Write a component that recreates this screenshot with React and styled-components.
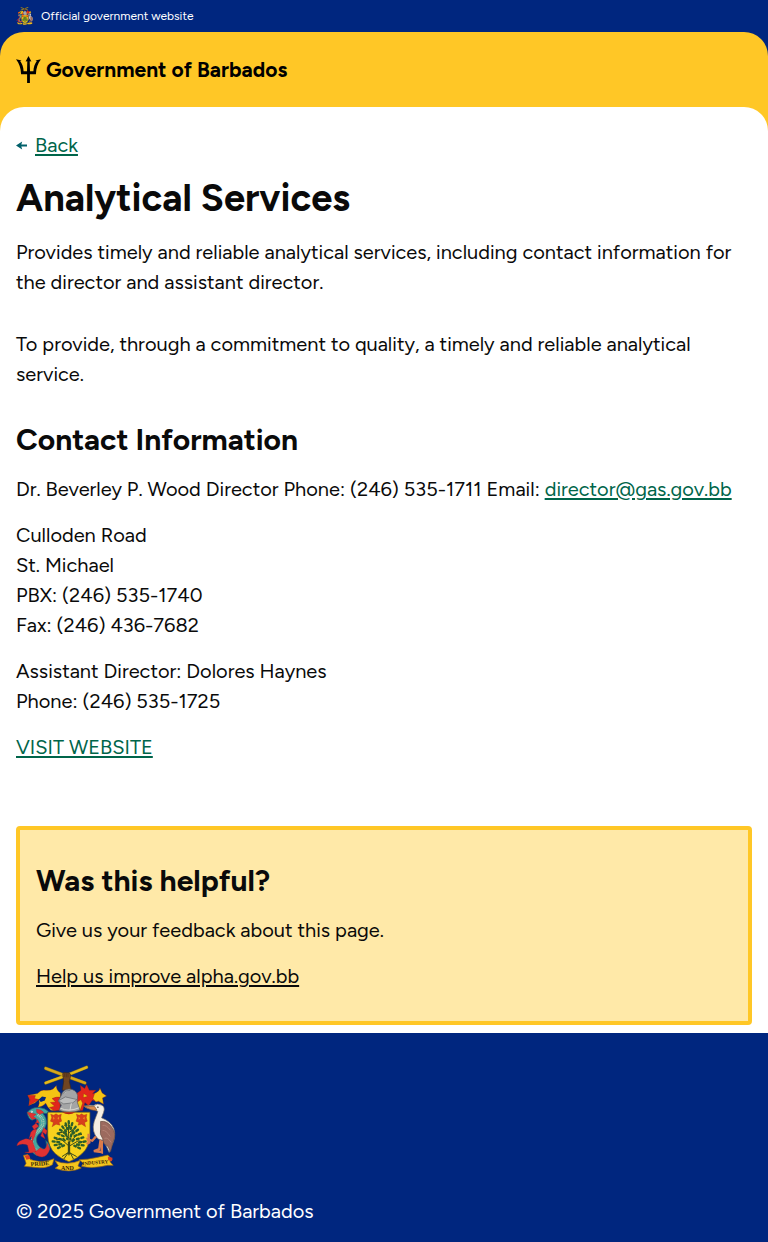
import React from "react";
import styled, { createGlobalStyle } from "styled-components";

const GlobalStyle = createGlobalStyle`
  *, *::before, *::after { box-sizing: border-box; }
  body {
    margin: 0;
    background: #fff;
    color: #0a0a0a;
    font-family: Figtree, Inter, "Liberation Sans", sans-serif;
    font-size: 20px;
    line-height: 30px;
  }
`;

const OfficialBar = styled.div`
  display: flex;
  align-items: center;
  gap: 8px;
  height: 32px;
  padding: 0 16px;
  background: #00267f;
  color: #fff;
  font-size: 12px;
  line-height: 16px;
`;

const HeaderBackdrop = styled.div`
  background: #00267f;
`;

const Header = styled.header`
  padding: 24px 16px;
  border-radius: 24px 24px 0 0;
  background: #ffc726;
`;

const Brand = styled.a`
  display: flex;
  align-items: center;
  gap: 5px;
  height: 27px;
  color: #000;
  font-size: 21px;
  font-weight: 700;
  text-decoration: none;
`;

const MainBackdrop = styled.div`
  background: linear-gradient(#ffc726 24px, #fff 24px);
`;

const Main = styled.main`
  padding: 23px 16px 8px;
  border-radius: 24px 24px 0 0;
  background: #fff;
`;

const Link = styled.a`
  color: ${(p) => (p.$plain ? "inherit" : "#00654a")};
  text-decoration: underline;
  text-decoration-thickness: 2px;
  text-underline-offset: 2px;
`;

const BackRow = styled.nav`
  display: flex;
  align-items: center;
  gap: 8px;
  margin-bottom: 15px;
`;

const Title = styled.h1`
  margin: 0 0 16px;
  font-size: 38px;
  font-weight: 700;
  line-height: 46px;
`;

const Heading = styled.h2`
  margin: 0 0 16px;
  font-size: 30px;
  font-weight: 700;
  line-height: 37px;
`;

const Text = styled.p`
  margin: 0 0 ${(p) => (p.$last ? "0" : p.$wide ? "32px" : "16px")};
`;

const Address = styled.address`
  margin-bottom: 16px;
  font-style: normal;
`;

const Feedback = styled.section`
  margin-top: 64px;
  padding: 32px 16px 30px;
  border: 4px solid #ffc726;
  border-radius: 4px;
  background: #ffe9a8;
`;

const Footer = styled.footer`
  display: flex;
  flex-direction: column;
  align-items: flex-start;
  gap: 24px;
  padding: 32px 16px 16px;
  background: #00267f;
  color: #fff;
`;

function Trident() {
  return (
    <svg width="25" height="27" viewBox="0 0 25 27" aria-hidden="true">
      <path d="M12.5 0 9.6 5.6 11.3 5.2 11 15.2H7.6C7.5 10.8 6.1 7.6 4.2 4.9L5.6 4.5 0 3.3C3.3 7.2 4.8 12.2 5.1 18.2H11.1V27H13.9V18.2H19.9C20.2 12.2 21.7 7.2 25 3.3L19.4 4.5 20.8 4.9C18.9 7.6 17.5 10.8 17.4 15.2H14L13.7 5.2 15.4 5.6Z" />
    </svg>
  );
}

function BackArrow() {
  return (
    <svg width="11" height="9" viewBox="0 0 11 9" fill="#00606a" aria-hidden="true">
      <path d="M0 4.5 6.2.5 5.3 3.5H11V5.6H5.3L6.2 8.5Z" />
    </svg>
  );
}

function Crest({ width, height, motto }) {
  return (
    <svg
      width={width}
      height={height}
      viewBox="18 15 300 322"
      role="img"
      aria-label="Coat of arms of Barbados"
    >
      {/* crossed canes and raised arm */}
      <g strokeLinecap="round" fill="none">
        <path d="M107 69 165 48 230 22" stroke="#8a7418" strokeWidth="10" />
        <path d="M107 69 165 48 230 22" stroke="#e3b91b" strokeWidth="7" />
        <path d="M107 25 165 47 225 69" stroke="#8a7418" strokeWidth="10" />
        <path d="M107 25 165 47 225 69" stroke="#d6a81d" strokeWidth="7" />
      </g>
      <path d="M158 42Q160 36 166 38L178 39Q184 43 181 52L178 65 184 91 157 91 161 64Z" fill="#704522" stroke="#3e2614" strokeWidth="2" />
      <path d="M164 40V51M169 40V52M174 41V52" stroke="#3e2614" strokeWidth="1.5" />

      {/* mantling */}
      <g stroke="#8d1a12" strokeWidth="1">
        <path d="M151 99Q139 92 139 77L129 87Q122 92 106 91 93 88 82 101 66 105 53 106L59 119 56 137 74 129 86 119Q90 132 83 142 98 141 107 130 113 144 122 151 151 156 152 128Z" fill="#f4c313" />
        <path d="M53 106 76 107 73 116 86 119 72 128 56 137 60 120Z" fill="#e1261c" />
        <path d="M126 116Q140 110 150 112V151L133 153 118 143 134 139 121 128 137 126Z" fill="#e1261c" />
        <path d="M86 119 96 110 108 112 104 122 92 126Z" fill="#00267f" stroke="none" />
        <path d="M197 103 213 91 211 76 224 86 230 74 238 91 258 91 248 101 263 101 251 113 264 111 265 125 247 121 236 138 225 128 218 152 195 153 182 126Z" fill="#e1261c" />
        <path d="M254 101Q270 93 270 84L277 99 290 108 278 114 281 133 266 124 258 126 249 116Z" fill="#f4c313" />
        <path d="M201 127 213 119 218 130 211 150 195 153 201 140ZM221 101 234 109 220 113Z" fill="#f4c313" />
      </g>

      {/* helmet */}
      <path d="M154 106Q158 88 177 87 198 88 203 106L202 127 210 151Q178 164 147 151L154 136 145 123Z" fill="#a4a5a6" stroke="#55585c" strokeWidth="2" />
      <path d="M145 123 166 111 201 119 188 129 161 132ZM158 102Q165 91 181 91" fill="#bcbdbd" stroke="#65686b" strokeWidth="2" />
      <path d="M151 145Q176 157 207 144M184 130 180 151" fill="none" stroke="#dcdad2" strokeWidth="3" />

      {/* shield */}
      <path d="M113 157H240V226Q238 264 216 282 202 296 177 306 151 296 136 282 114 262 113 226Z" fill="#f8d21d" stroke="#785a10" strokeWidth="2" />
      <path d="M156 157Q177 169 196 157Z" fill="#b32219" />
      <g fill="#d8401c" stroke="#a03414" strokeWidth="1">
        <path d="M122 163 131 166 138 162 145 166 154 163 152 173 155 184 147 188 150 196 138 193 126 201 130 188 121 184 125 173Z" />
        <path d="M199 163 208 166 215 162 222 166 231 163 229 173 232 184 224 188 227 201 215 193 204 196 207 188 198 184 202 173Z" />
      </g>
      <g fill="#f0941f">
        <path d="M129 171 134 175 130 180ZM147 171 142 175 147 180ZM206 171 211 175 206 180ZM224 171 219 175 224 180Z" />
      </g>

      {/* bearded fig tree */}
      <g fill="none" stroke="#3a4a1c" strokeWidth="3" strokeLinecap="round">
        <path d="M177 286Q180 256 176 229L175 189M177 259 153 238 139 240M178 247 201 226 215 224M178 235 158 218 146 218M177 219 195 204M177 207 163 196M178 259 205 243 221 247M175 278 157 290M177 278 199 290M174 280 162 297M181 280 190 297" />
      </g>
      <path d="M177 246V284" stroke="#3a4a1c" strokeWidth="7" />
      <g fill="none" stroke="#2c5f2a" strokeWidth="7" strokeLinecap="round" strokeDasharray="6 8">
        <path d="M176 184 178 203M167 191 172 208M187 190 182 208M157 200 168 215M197 201 187 216" />
        <path d="M150 210 166 220M204 210 189 221M143 221 162 230M212 221 191 230" />
        <path d="M134 234 157 240M220 233 198 239M128 245 152 248M227 245 203 249" />
        <path d="M134 256 156 253M221 257 199 254M144 265 162 257M210 266 193 258" />
        <path d="M168 222 172 238M184 224 181 238M160 238 169 247M192 240 184 248" />
      </g>

      {/* dolphin */}
      <path d="M51 158Q65 141 87 143 106 145 115 155L109 161 98 160Q111 174 109 191 107 207 92 219 76 229 80 247 84 263 105 270 113 258 107 242 127 258 115 277 102 292 79 287 59 278 59 253 61 227 80 208 92 195 81 184L77 176 66 181Q54 177 51 158Z" fill="#45a7a1" stroke="#275d60" strokeWidth="2" />
      <path d="M83 164Q102 177 98 194 92 208 77 220 64 234 67 252 72 272 91 278" fill="none" stroke="#b3c9b0" strokeWidth="9" strokeDasharray="3 2" />
      <path d="M92 170Q102 184 97 197 83 217 72 230 67 251 80 273" fill="none" stroke="#3fa69e" strokeWidth="2" />
      <g fill="#e13232" stroke="#a62029" strokeWidth="1">
        <path d="M51 157Q65 158 78 163L70 171 79 176 66 179Q59 172 51 157ZM79 148Q96 149 101 158L89 164 80 158ZM82 178 88 190 76 188 86 199 72 210 66 199 76 192ZM80 207 68 211 62 218 57 237 64 229 67 246 74 229ZM101 203 111 213 108 224 97 217 105 237 92 229ZM66 242Q48 234 41 239 23 243 20 258 36 249 52 256L57 276 44 278Q67 282 78 275L72 258ZM91 264Q107 278 112 250L119 268Q113 290 96 292 77 289 73 278Z" />
      </g>
      <circle cx="65" cy="156" r="3" fill="#fff" />
      <circle cx="65" cy="156" r="1" />

      {/* pelican */}
      <path d="M245 148Q229 146 222 139L240 136 251 137Q263 129 276 136 287 141 281 158L275 174Q302 184 312 206 320 231 305 260L298 278 292 265 280 242 265 238Q243 216 253 184L264 155 254 150Z" fill="#f5eee3" stroke="#776b5b" strokeWidth="2" />
      <path d="M272 185Q291 182 305 201 322 221 309 248L302 276 294 260 282 251 278 236Q268 224 272 208Z" fill="#9c6a5e" stroke="#684b3f" strokeWidth="2" />
      <path d="M278 197Q289 194 301 211M278 212Q288 210 301 230M284 236Q293 231 304 248" fill="none" stroke="#b28273" strokeWidth="3" />
      <path d="M222 138 254 140 261 151Q242 154 222 138Z" fill="#db8b50" stroke="#7d5531" strokeWidth="2" />
      <circle cx="264" cy="142" r="2" />
      <path d="M258 230 247 243 234 239 238 248 230 253M236 222V240M272 240 268 268 252 274 269 276 276 278 276 243" fill="none" stroke="#db7b4c" strokeWidth="7" />

      {/* motto ribbon */}
      <g fill="#f5c51d" stroke="#9b6a13" strokeWidth="2">
        <path d="M40 287 53 284 60 299Q83 309 115 303L132 297 127 315Q107 328 73 323L43 320 48 311Z" />
        <path d="M135 303Q174 319 211 302L204 319 214 325Q179 342 135 326L145 318Z" />
        <path d="M208 300Q232 300 262 293L294 286 307 300 300 306 310 317 293 317Q247 328 215 320L220 311Z" />
      </g>
      <path d="M43 287 57 286 61 297 49 300ZM294 291 308 294 306 305 295 302Z" fill="#db3d24" />
      {motto && (
        <g fill="#332408" fontFamily="Liberation Serif, serif" fontSize="18" fontWeight="700">
          <text x="62" y="320" transform="rotate(-4 62 320)">PRIDE</text>
          <text x="153" y="331">AND</text>
          <text x="218" y="317" fontSize="15" transform="rotate(-5 218 317)">INDUSTRY</text>
        </g>
      )}
    </svg>
  );
}

export default function App() {
  return (
    <>
      <GlobalStyle />
      <OfficialBar>
        <Crest width={17} height={18} />
        <span>Official government website</span>
      </OfficialBar>
      <HeaderBackdrop>
        <Header>
          <Brand href="#home">
            <Trident />
            <span>Government of Barbados</span>
          </Brand>
        </Header>
      </HeaderBackdrop>
      <MainBackdrop>
        <Main>
          <BackRow aria-label="Back">
            <BackArrow />
            <Link href="#back">Back</Link>
          </BackRow>
          <Title>Analytical Services</Title>
          <Text $wide>
            Provides timely and reliable analytical services, including contact
            information for the director and assistant director.
          </Text>
          <Text $wide>
            To provide, through a commitment to quality, a timely and reliable
            analytical service.
          </Text>
          <Heading>Contact Information</Heading>
          <Text>
            Dr. Beverley P. Wood Director Phone: (246) 535-1711 Email:{" "}
            <Link href="mailto:director@gas.gov.bb">director@gas.gov.bb</Link>
          </Text>
          <Address>
            Culloden Road
            <br />
            St. Michael
            <br />
            PBX: (246) 535-1740
            <br />
            Fax: (246) 436-7682
          </Address>
          <Text>
            Assistant Director: Dolores Haynes
            <br />
            Phone: (246) 535-1725
          </Text>
          <Text $last>
            <Link href="#website">VISIT WEBSITE</Link>
          </Text>
          <Feedback>
            <Heading>Was this helpful?</Heading>
            <Text>Give us your feedback about this page.</Text>
            <Text $last>
              <Link $plain href="#feedback">Help us improve alpha.gov.bb</Link>
            </Text>
          </Feedback>
        </Main>
      </MainBackdrop>
      <Footer>
        <Crest width={100} height={107} motto />
        <Text $last>© 2025 Government of Barbados</Text>
      </Footer>
    </>
  );
}
